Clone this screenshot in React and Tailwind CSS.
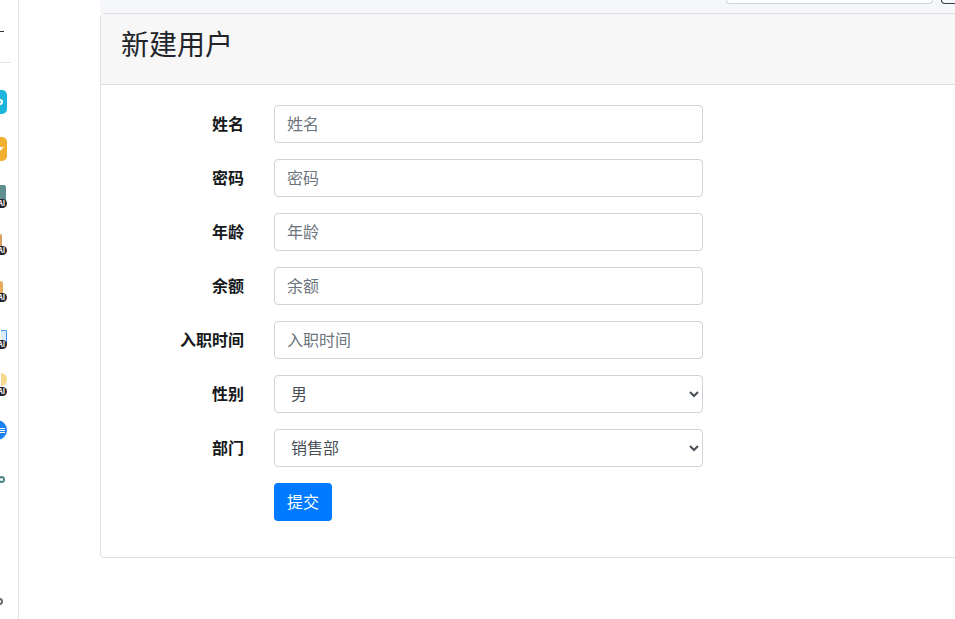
const cjk = "font-['Microsoft_YaHei','Noto_Sans_CJK_SC','Liberation_Sans',sans-serif]";

function AiIcon({ children }) {
  return (
    <div className="relative flex h-[24px] w-[24px] shrink-0 items-start justify-end">
      {children}
      <span className="absolute bottom-0 right-0 flex h-[9px] w-[14px] items-center justify-end rounded-full bg-[#23232f] pr-[2px] text-[7px] font-bold leading-none text-white">
        AI
      </span>
    </div>
  );
}

function Sidebar() {
  return (
    <aside className="flex h-[619px] w-[19px] shrink-0 flex-col overflow-hidden border-r border-[#e3e3e3] bg-white">
      <div className="h-[31px] shrink-0" />
      <div className="h-px w-[4px] shrink-0 bg-[#333333]" />
      <div className="h-[30px] shrink-0" />
      <div className="h-px w-[11px] shrink-0 bg-[#e5e5e5]" />
      <div className="flex w-[7px] flex-col items-end pt-[27px]">
        <div className="flex h-[24px] w-[24px] shrink-0 items-center justify-end rounded-[5px] bg-[#1cb6dd] pr-[4px]">
          <span className="h-[6px] w-[6px] shrink-0 rounded-full border-2 border-white" />
        </div>
        <div className="mt-[23px] flex h-[24px] w-[24px] shrink-0 items-center justify-end rounded-[5px] bg-[#f2b02e] pr-[3px]">
          <span className="h-0 w-0 border-x-[4px] border-t-[4px] border-x-transparent border-t-white" />
        </div>
        <div className="mt-[23px]">
          <AiIcon>
            <div className="mr-[1px] mt-[1px] h-[16px] w-[6px] rounded-tr-[2px] bg-[#5f8f90]" />
          </AiIcon>
        </div>
        <div className="mt-[23px]">
          <AiIcon>
            <div className="mr-[5px] mt-[3px] h-[14px] w-[2px] rounded-tr-[2px] bg-[#d9a066]" />
          </AiIcon>
        </div>
        <div className="mt-[23px]">
          <AiIcon>
            <div className="mr-[4px] mt-[3px] h-[15px] w-[3px] rounded-tr-[3px] bg-[#e9ab5c]" />
          </AiIcon>
        </div>
        <div className="mt-[23px]">
          <AiIcon>
            <div className="mr-0 mt-[5px] h-[14px] w-[6px] rounded-tr-[2px] border-r border-t border-[#3b8ff0] bg-[#dcebfb]" />
          </AiIcon>
        </div>
        <div className="mt-[23px]">
          <AiIcon>
            <div className="mr-0 mt-[1px] h-[13px] w-[6px] rounded-r-full bg-[#f6d98f]" />
          </AiIcon>
        </div>
        <div className="mt-[24px] flex h-[20px] w-[20px] shrink-0 flex-col items-end justify-center gap-[1px] rounded-full bg-[#1b80f2] pr-[2px]">
          <span className="h-px w-[5px] bg-white" />
          <span className="h-px w-[5px] bg-white" />
          <span className="h-px w-[5px] bg-white" />
        </div>
        <div className="mr-[2px] mt-[36px] h-[7px] w-[7px] shrink-0 rounded-full border-2 border-[#4f8582]" />
        <div className="mr-[4px] mt-[115px] h-[7px] w-[7px] shrink-0 rounded-full border-2 border-[#6b6b6b]" />
      </div>
    </aside>
  );
}

function Field({ label, children }) {
  return (
    <div className="flex h-[38px] items-center">
      <label className="w-[143px] pb-[2px] text-right text-[16px] font-bold leading-6 text-[#16181b]">
        {label}
      </label>
      <div className="ml-[30px]">{children}</div>
    </div>
  );
}

function TextInput({ placeholder }) {
  return (
    <input
      placeholder={placeholder}
      className="block h-[38px] w-[429px] rounded-[4px] border border-[#ced4da] bg-white px-3 pb-[2px] text-[16px] text-[#495057] outline-none placeholder:text-[#6c757d]"
    />
  );
}

function Select({ options }) {
  return (
    <select className="block h-[38px] w-[429px] rounded-[4px] border border-[#ced4da] bg-white px-3 pb-[2px] text-[16px] text-[#495057] outline-none">
      {options.map((o) => (
        <option key={o}>{o}</option>
      ))}
    </select>
  );
}

export default function App() {
  return (
    <div className={`flex h-[619px] w-[955px] overflow-hidden bg-white ${cjk}`}>
      <Sidebar />
      <main className="min-w-0 flex-1 pl-[81px]">
        <div className="flex h-[13px] w-[900px] items-start bg-[#f5f7fa]">
          <div className="ml-[626px] h-[4px] w-[207px] rounded-b-[4px] border border-t-0 border-[#ced4da] bg-white" />
          <div className="ml-[8px] h-[4px] w-[30px] rounded-bl-[4px] border border-t-0 border-[#343a40]" />
        </div>
        <section className="h-[545px] w-[900px] rounded-[4px] border border-[#dfdfdf] bg-white">
          <header className="flex h-[71px] items-center border-b border-[#dfdfdf] bg-[#f7f7f7] px-5 pb-[11px]">
            <h3 className="text-[28px] font-normal leading-[1.2] text-[#212529]">新建用户</h3>
          </header>
          <form className="flex flex-col gap-4 pt-5">
            <Field label="姓名"><TextInput placeholder="姓名" /></Field>
            <Field label="密码"><TextInput placeholder="密码" /></Field>
            <Field label="年龄"><TextInput placeholder="年龄" /></Field>
            <Field label="余额"><TextInput placeholder="余额" /></Field>
            <Field label="入职时间"><TextInput placeholder="入职时间" /></Field>
            <Field label="性别"><Select options={["男", "女"]} /></Field>
            <Field label="部门"><Select options={["销售部", "技术部"]} /></Field>
            <div className="pl-[173px]">
              <button type="button" className="h-[38px] w-[58px] rounded-[4px] bg-[#007bff] pb-[2px] text-[16px] text-white">
                提交
              </button>
            </div>
          </form>
        </section>
      </main>
    </div>
  );
}
